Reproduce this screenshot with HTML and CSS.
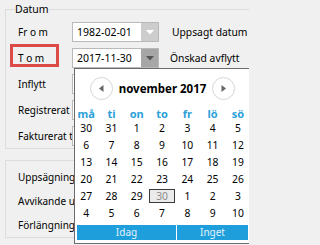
FILE: index.html
```html
<!DOCTYPE html>
<html lang="sv">
<head>
<meta charset="utf-8">
<title>Datum</title>
<link rel="stylesheet" href="styles.css">
</head>
<body>
<div class="frame">
  <div class="page">
    <fieldset class="group first">
      <legend>Datum</legend>
      <div class="row">
        <span class="label">Fr o m</span>
        <div class="combo"><span class="value">1982-02-01</span><span class="drop light"><svg width="8" height="5" viewBox="0 0 8 5"><path d="M0 0h8L4 4.5z" fill="#fff"/></svg></span></div>
        <span class="side">Uppsagt datum</span>
      </div>
      <div class="row">
        <span class="label">T o m</span>
        <div class="combo"><span class="value">2017-11-30</span><span class="drop dark"><svg width="8" height="5" viewBox="0 0 8 5"><path d="M0 0h8L4 4.5z" fill="#555"/></svg></span></div>
        <span class="side side2">Önskad avflytt</span>
      </div>
      <div class="row">
        <span class="label">Inflytt</span>
        <div class="combo"></div>
      </div>
      <div class="row">
        <span class="label">Registrerat</span>
        <div class="combo"></div>
      </div>
      <div class="row">
        <span class="label">Fakturerat t</span>
        <div class="combo"></div>
      </div>
    </fieldset>
    <fieldset class="group second">
      <div class="row">
        <span class="label wide">Uppsägningstid</span>
      </div>
      <div class="row">
        <span class="label wide">Avvikande uppsägning</span>
      </div>
      <div class="row">
        <span class="label wide">Förlängning</span>
      </div>
    </fieldset>
  </div>

  <div class="mark"></div>

  <div class="calendar">
    <div class="cal-head">
      <span class="nav prev"><svg width="5" height="7" viewBox="0 0 5 7"><path d="M4.5 0v7L0 3.5z" fill="#666"/></svg></span>
      <span class="title">november 2017</span>
      <span class="nav next"><svg width="5" height="7" viewBox="0 0 5 7"><path d="M0.5 0v7L5 3.5z" fill="#666"/></svg></span>
    </div>
    <div class="grid wd">
      <span>må</span><span>ti</span><span>on</span><span>to</span><span>fr</span><span>lö</span><span>sö</span>
    </div>
    <div class="grid days">
      <span>30</span><span>31</span><span>1</span><span>2</span><span>3</span><span>4</span><span>5</span>
      <span>6</span><span>7</span><span>8</span><span>9</span><span>10</span><span>11</span><span>12</span>
      <span>13</span><span>14</span><span>15</span><span>16</span><span>17</span><span>18</span><span>19</span>
      <span>20</span><span>21</span><span>22</span><span>23</span><span>24</span><span>25</span><span>26</span>
      <span>27</span><span>28</span><span>29</span><span><b class="sel">30</b></span><span>1</span><span>2</span><span>3</span>
      <span>4</span><span>5</span><span>6</span><span>7</span><span>8</span><span>9</span><span>10</span>
    </div>
    <div class="cal-foot">
      <span class="btn today">Idag</span>
      <span class="btn none">Inget</span>
    </div>
  </div>
</div>
</body>
</html>
```

FILE: styles.css
```css
html, body {
  margin: 0;
  padding: 0;
  overflow: hidden;
}
body {
  background: #f0f0f0;
  font-family: "Noto Sans", "Open Sans", sans-serif;
  font-size: 10px;
  color: #000;
}
.frame {
  position: relative;
  width: 249px;
  height: 245px;
  overflow: hidden;
}
.page {
  padding-top: 2px;
}
.group {
  margin: 0 0 0 5px;
  width: 300px;
  border: 1px solid #dcdcdc;
  padding: 0 0 2px 9px;
  min-width: 0;
}
.group legend {
  padding: 0;
  line-height: 14px;
  height: 14px;
  font-size: 10.5px;
}
.group.second {
  margin-top: 11px;
  padding-top: 6px;
}
.row {
  display: flex;
  align-items: center;
  height: 20px;
  margin-top: 6px;
  white-space: nowrap;
}
.second .row {
  margin-top: 4px;
}
.second .row:first-child {
  margin-top: 0;
}
.label {
  width: 54px;
  padding-left: 3px;
  flex: none;
}
.label.wide {
  width: 56px;
  overflow: hidden;
}
.combo {
  box-sizing: border-box;
  width: 87px;
  height: 20px;
  border: 1px solid #b9b9b9;
  background: #fff;
  display: flex;
  align-items: stretch;
  flex: none;
  position: relative;
}
.value {
  flex: 1;
  padding-left: 4px;
  line-height: 18px;
  font-size: 10.5px;
}
.drop {
  width: 17px;
  display: flex;
  align-items: center;
  justify-content: center;
}
.drop.light { background: #cdcdcd; }
.drop.dark { background: #a6a6a6; }
.side {
  margin-left: 13px;
  font-size: 10.3px;
}
.side2 {
  margin-left: 11px;
}
.mark {
  position: absolute;
  left: 10px;
  top: 44px;
  width: 49px;
  height: 23px;
  box-sizing: border-box;
  border: 3px solid #dc4b47;
}
.calendar {
  position: absolute;
  left: 74px;
  top: 68px;
  width: 177px;
  height: 176px;
  box-sizing: border-box;
  border: 1px solid #6b6b6b;
  background: #fff;
}
.cal-head {
  height: 38px;
  display: flex;
  align-items: center;
  padding-left: 15px;
}
.nav {
  box-sizing: border-box;
  width: 23px;
  height: 23px;
  border: 1px solid #d6d6d6;
  border-radius: 50%;
  display: flex;
  align-items: center;
  justify-content: center;
  flex: none;
}
.title {
  width: 99px;
  text-align: center;
  font-weight: bold;
  font-size: 11.5px;
  flex: none;
}
.grid {
  display: grid;
  grid-template-columns: repeat(7, 25.3px);
  margin-left: -1.5px;
  text-align: center;
}
.wd {
  height: 13px;
  line-height: 13px;
  font-weight: bold;
  color: #2b9fd9;
  font-size: 11px;
}
.days span {
  height: 17px;
  line-height: 17px;
  display: flex;
  align-items: center;
  justify-content: center;
  font-size: 10.3px;
}
.sel {
  font-weight: normal;
  box-sizing: border-box;
  width: 26px;
  height: 14px;
  line-height: 12px;
  border: 1px solid #3a3a3a;
  background: #ebebeb;
  color: #8a8a8a;
  margin-top: -2px;
}
.cal-foot {
  margin: 3px 2px 0 2px;
  height: 15px;
  display: flex;
  gap: 1px;
}
.btn {
  background: #1e9fdb;
  color: #e4f3fb;
  line-height: 15px;
  text-align: center;
}
.today { width: 99px; }
.none { flex: 1; }
```
